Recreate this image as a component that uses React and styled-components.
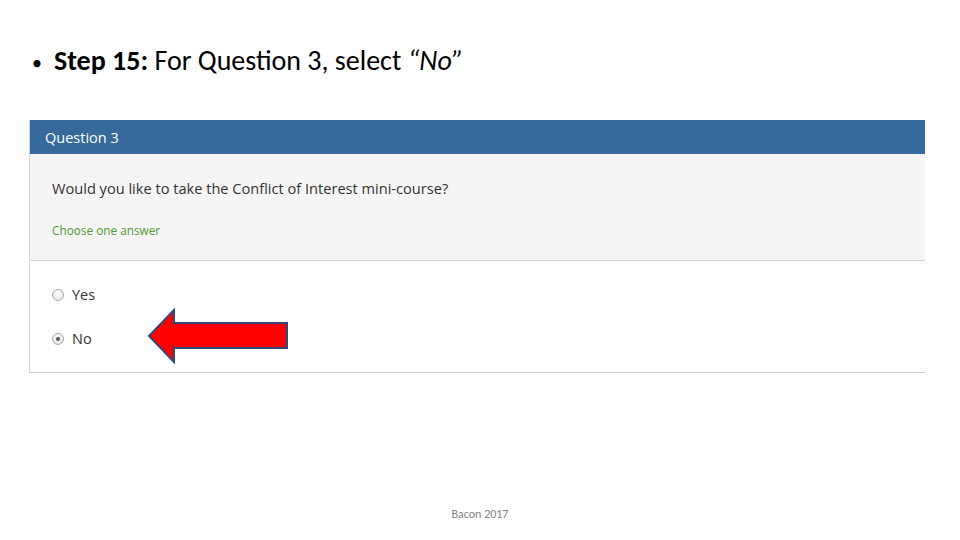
import styled, { createGlobalStyle } from 'styled-components';

const GlobalStyle = createGlobalStyle`
  html, body {
    margin: 0;
    padding: 0;
    background: #ffffff;
  }
`;

const Slide = styled.div`
  position: relative;
  width: 960px;
  height: 540px;
  box-sizing: border-box;
  padding: 43px 36px 0 29px;
  display: flex;
  flex-direction: column;
  font-family: "Open Sans", "Noto Sans", sans-serif;
`;

const Bullet = styled.div`
  display: flex;
  align-items: baseline;
  gap: 12px;
  padding-left: 0;
  font-family: "Carlito", "Liberation Sans", sans-serif;
  font-size: 28px;
  color: #000;
  height: 40px;
  margin-bottom: 37px;
`;

const Dot = styled.span`
  font-size: 20px;
  padding-left: 3px;
`;

const Card = styled.div`
  position: relative;
  width: 895px;
  border-left: 1px solid #d6d6d6;
  border-bottom: 1px solid #cfcfcf;
`;

const CardHeader = styled.div`
  height: 34px;
  background: #356a9b;
  color: #fff;
  font-size: 14.5px;
  display: flex;
  align-items: center;
  padding-left: 15px;
`;

const Prompt = styled.div`
  background: #f5f5f5;
  border-bottom: 1px solid #d2d2d2;
  padding: 24px 22px 0;
  height: 107px;
  box-sizing: border-box;
`;

const QuestionText = styled.div`
  font-size: 14.6px;
  color: #333;
`;

const Hint = styled.div`
  margin-top: 24px;
  font-size: 11.8px;
  color: #4f9a2f;
`;

const Options = styled.div`
  display: flex;
  flex-direction: column;
  gap: 25px;
  padding: 24px 22px 24px;
`;

const Option = styled.label`
  display: flex;
  align-items: center;
  gap: 8px;
  font-size: 14.5px;
  color: #333;
  height: 19px;
`;

const Radio = styled.span`
  width: 10px;
  height: 10px;
  border-radius: 50%;
  border: 1px solid #a8a8a8;
  background: radial-gradient(circle at 50% 35%, #ffffff, #dcdcdc);
  display: flex;
  align-items: center;
  justify-content: center;
  &::after {
    content: '';
    width: 4px;
    height: 4px;
    border-radius: 50%;
    background: ${(p) => (p.checked ? '#555' : 'transparent')};
  }
`;

const Arrow = styled.svg`
  position: absolute;
  left: 117px;
  top: 188px;
`;

const Footer = styled.div`
  position: absolute;
  left: 0;
  right: 0;
  top: 507px;
  text-align: center;
  font-family: "Carlito", "Liberation Sans", sans-serif;
  font-size: 12px;
  color: #7f7f7f;
`;

export default function App() {
  return (
    <>
      <GlobalStyle />
      <Slide>
        <Bullet>
          <Dot>•</Dot>
          <span>
            <b>Step 15:</b> For Question 3, select <i>“No”</i>
          </span>
        </Bullet>
        <Card>
          <CardHeader>Question 3</CardHeader>
          <Prompt>
            <QuestionText>Would you like to take the Conflict of Interest mini-course?</QuestionText>
            <Hint>Choose one answer</Hint>
          </Prompt>
          <Options>
            <Option>
              <Radio />
              Yes
            </Option>
            <Option>
              <Radio checked />
              No
            </Option>
          </Options>
          <Arrow width="144" height="56" viewBox="0 0 144 56">
            <polygon
              points="2,28 27,2 27,15 140,15 140,40 27,40 27,54"
              fill="#ff0000"
              stroke="#2f4a7a"
              strokeWidth="2"
              strokeLinejoin="miter"
            />
          </Arrow>
        </Card>
        <Footer>Bacon 2017</Footer>
      </Slide>
    </>
  );
}
